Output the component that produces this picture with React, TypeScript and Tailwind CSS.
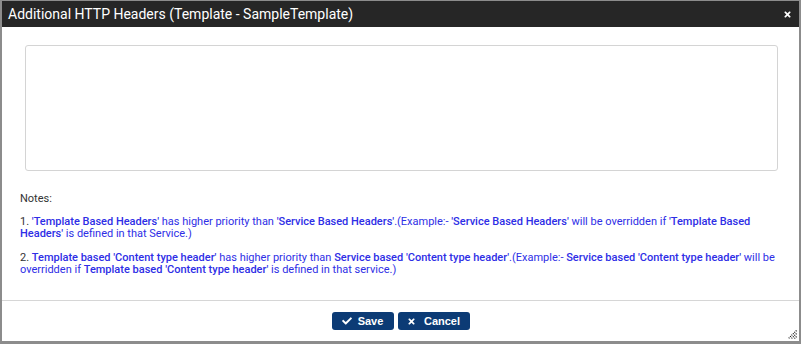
import React from 'react';
import { FaCheck, FaTimes } from 'react-icons/fa';

const Q = ({ children }: { children: React.ReactNode }) => <span className="text-[#2e2ee6]">{children}</span>;
const B = ({ children }: { children: React.ReactNode }) => <span className="font-medium">{children}</span>;

const ResizeGrip: React.FC = () => (
    <svg width="9" height="9" viewBox="0 0 9 9" className="absolute right-[2px] bottom-[2px]">
        <path d="M8.5 0.5 L0.5 8.5 M8.5 3.5 L3.5 8.5 M8.5 6.5 L6.5 8.5" stroke="#111" strokeWidth="1.2" strokeDasharray="1 1" />
    </svg>
);

const App: React.FC = () => {
    return (
        <div className="w-[801px] h-[344px] bg-white border-t border-x-2 border-b-[3px] border-[#8c8c8c] relative flex flex-col font-['Roboto',sans-serif]">
            <div className="h-[26px] bg-[#262626] flex items-center justify-between pl-[6px] pr-[7px] shrink-0">
                <span className="text-white text-[14px] leading-none">Additional HTTP Headers (Template - SampleTemplate)</span>
                <FaTimes className="text-white w-[9px] h-[9px]" />
            </div>
            <div className="flex-1 pt-[18px] px-[18px]">
                <div className="ml-[5px] mr-[3px] h-[126px] border border-[#d4d4d4] rounded-[3px]"></div>
                <div className="text-[11px] leading-[12px] text-[#333] mt-[22px]">
                    <p>Notes:</p>
                    <p className="mt-[11px]">
                        1. <Q><B>'Template Based Headers'</B> has higher priority than <B>'Service Based Headers'</B>.(Example:- <B>'Service Based Headers'</B> will be overridden if <B>'Template Based Headers'</B> is defined in that Service.)</Q>
                    </p>
                    <p className="mt-[12px]">
                        2. <Q><B>Template based 'Content type header'</B> has higher priority than <B>Service based 'Content type header'</B>.(Example:- <B>Service based 'Content type header'</B> will be overridden if <B>Template based 'Content type header'</B> is defined in that service.)</Q>
                    </p>
                </div>
            </div>
            <div className="border-t border-[#d6d6d6] h-[41px] shrink-0 flex justify-center pt-[11px] gap-[4px] font-['Liberation_Sans',sans-serif]">
                <button className="h-[18px] w-[62px] bg-[#0c3b75] rounded-[3px] text-white text-[11px] font-bold flex items-center justify-center gap-[6px]">
                    <FaCheck className="w-[10px] h-[10px]" />
                    Save
                </button>
                <button className="h-[18px] w-[72px] bg-[#0c3b75] rounded-[3px] text-white text-[11px] font-bold flex items-center justify-center gap-[8px]">
                    <FaTimes className="w-[9px] h-[9px]" />
                    Cancel
                </button>
            </div>
            <ResizeGrip />
        </div>
    );
};

export default App;
